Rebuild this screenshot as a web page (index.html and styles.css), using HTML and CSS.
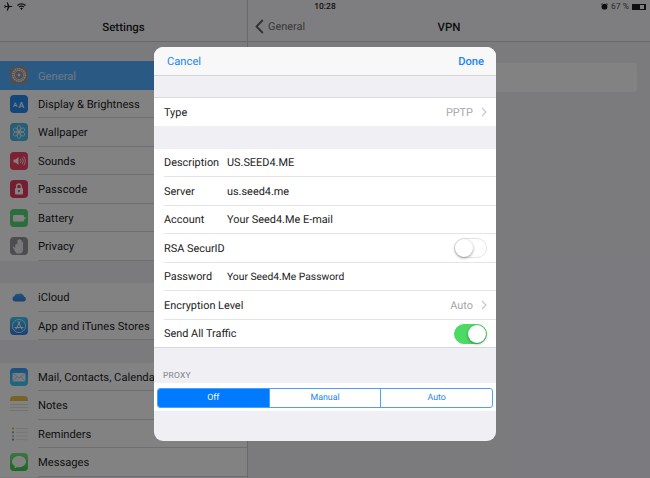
FILE: index.html
```html
<!DOCTYPE html>
<html lang="en">
<head>
<meta charset="utf-8">
<title>VPN Settings</title>
<link rel="stylesheet" href="styles.css">
</head>
<body>
<div class="app">
  <aside class="sidebar">
    <header class="nav nav-center"><span class="nav-title">Settings</span></header>
    <ul class="group">
      <li class="row selected"><span class="icon ic-general"><svg viewBox="0 0 18 18"><circle cx="9" cy="9" r="6.2" fill="none" stroke="#e8e8ec" stroke-width="1.8" stroke-dasharray="1.5 .7"/><circle cx="9" cy="9" r="4.6" fill="none" stroke="#e8e8ec" stroke-width=".8"/><circle cx="9" cy="9" r="1.4" fill="#e8e8ec"/></svg></span><span class="label">General</span></li>
      <li class="row"><span class="icon ic-display"><svg viewBox="0 0 18 18"><text x="3" y="12" class="aa-small">A</text><text x="8.6" y="12.6" class="aa-big">A</text></svg></span><span class="label">Display &amp; Brightness</span></li>
      <li class="row"><span class="icon ic-wall"><svg viewBox="0 0 18 18"><g fill="none" stroke="#fff" stroke-width=".7"><ellipse cx="9" cy="5.7" rx="2" ry="3.1"/><ellipse cx="9" cy="12.3" rx="2" ry="3.1"/><ellipse cx="9" cy="5.7" rx="2" ry="3.1" transform="rotate(60 9 9)"/><ellipse cx="9" cy="12.3" rx="2" ry="3.1" transform="rotate(60 9 9)"/><ellipse cx="9" cy="5.7" rx="2" ry="3.1" transform="rotate(120 9 9)"/><ellipse cx="9" cy="12.3" rx="2" ry="3.1" transform="rotate(120 9 9)"/></g></svg></span><span class="label">Wallpaper</span></li>
      <li class="row"><span class="icon ic-sounds"><svg viewBox="0 0 18 18"><path d="M3.5 7.5h2L8.5 5v8l-3-2.500h-2z" fill="#fff"/><path d="M10.300 7a3 3 0 0 1 0 4M12 5.700a5 5 0 0 1 0 6.600M13.700 4.500a7 7 0 0 1 0 9" fill="none" stroke="#fff" stroke-width=".8"/></svg></span><span class="label">Sounds</span></li>
      <li class="row"><span class="icon ic-pass"><svg viewBox="0 0 18 18"><rect x="5" y="8" width="8" height="6.500" rx="1" fill="#fff"/><path d="M6.700 8V6.300a2.300 2.300 0 0 1 4.600 0V8" fill="none" stroke="#fff" stroke-width="1.300"/><circle cx="9" cy="11" r="1" fill="#e0214f"/></svg></span><span class="label">Passcode</span></li>
      <li class="row"><span class="icon ic-batt"><svg viewBox="0 0 18 18"><rect x="3" y="6" width="11" height="6.500" rx="1" fill="#fff"/><rect x="14.300" y="8" width="1.200" height="2.500" fill="#fff"/></svg></span><span class="label">Battery</span></li>
      <li class="row"><span class="icon ic-priv"><svg viewBox="0 0 18 18"><path d="M5.200 7.500v3.800l-1.600-2-.9.600 2.600 5c.6 1 1.500 1.600 3 1.600h1.400c2 0 3.300-1.500 3.300-3.500V5.500c0-1.100-1.300-1.100-1.300 0v3V3.600c0-1.100-1.400-1.100-1.400 0v4.900V2.700c0-1.100-1.500-1.100-1.500 0v5.800-5c0-1.100-1.400-1.100-1.400 0v5-1c0-1.100-1.200-1.100-1.200 0z" fill="#e9e9ee"/></svg></span><span class="label">Privacy</span></li>
    </ul>
    <ul class="group">
      <li class="row"><span class="icon ic-cloud"><svg viewBox="0 0 18 18"><defs><linearGradient id="cloud" x1="0" y1="0" x2="0" y2="1"><stop offset="0" stop-color="#2e9bf0"/><stop offset="1" stop-color="#1a6fd8"/></linearGradient></defs><path d="M5 13.500a2.800 2.800 0 0 1-.5-5.500 3 3 0 0 1 3.600-2 4 4 0 0 1 6 2.600 2.500 2.500 0 0 1-.4 4.900z" fill="url(#cloud)"/></svg></span><span class="label">iCloud</span></li>
      <li class="row"><span class="icon ic-store"><svg viewBox="0 0 18 18"><circle cx="9" cy="9" r="6.600" fill="none" stroke="#fff" stroke-width=".7"/><path d="M9.800 4.800 6 12.200M8.200 4.800 12 12.200M4.800 10.600h8.400" fill="none" stroke="#fff" stroke-width="1" stroke-linecap="round"/></svg></span><span class="label">App and iTunes Stores</span></li>
    </ul>
    <ul class="group">
      <li class="row"><span class="icon ic-mail"><svg viewBox="0 0 18 18"><rect x="2.500" y="5" width="13" height="8.500" rx=".8" fill="#eef3f9"/><path d="M2.800 5.300 9 10l6.200-4.700M2.800 13.200 7 8.800M15.200 13.200 11 8.800" fill="none" stroke="#7ea3d0" stroke-width=".6"/></svg></span><span class="label">Mail, Contacts, Calendars</span></li>
      <li class="row"><span class="icon ic-notes"><svg viewBox="0 0 18 18"><path d="M0 2.500h18" stroke="#e6ba2e" stroke-width="5"/><path d="M0 8.500h18M0 11.500h18M0 14.500h18" stroke="#d4d4d4" stroke-width=".7"/></svg></span><span class="label">Notes</span></li>
      <li class="row"><span class="icon ic-rem"><svg viewBox="0 0 18 18"><circle cx="3" cy="3.500" r="1.100" fill="#ff9500"/><circle cx="3" cy="7.300" r="1.100" fill="#2aa7e8"/><circle cx="3" cy="11" r="1.100" fill="#4cd964"/><circle cx="3" cy="14.700" r="1.100" fill="#b15cd6"/><path d="M6 3.500h12M6 7.300h12M6 11h12M6 14.700h12" stroke="#d4d4d4" stroke-width=".7"/></svg></span><span class="label">Reminders</span></li>
      <li class="row"><span class="icon ic-msg"><svg viewBox="0 0 18 18"><path d="M9 3c-3.900 0-7 2.500-7 5.600 0 2 1.200 3.700 3.100 4.700-.2.800-.6 1.500-1.300 2.100 1.200 0 2.300-.5 3.200-1.300.6.100 1.300.2 2 .2 3.900 0 7-2.500 7-5.700S12.900 3 9 3z" fill="#fff"/></svg></span><span class="label">Messages</span></li>
    </ul>
  </aside>
  <main class="detail">
    <header class="nav nav-detail">
      <span class="back"><svg class="back-chev" viewBox="0 0 9 15"><path d="M7.800 1 1.500 7.500l6.300 6.500" fill="none" stroke="#007aff" stroke-width="1.800"/></svg>General</span>
      <span class="nav-title">VPN</span>
    </header>
    <div class="vpn-card"></div>
  </main>
  <div class="status">
    <span class="status-left"><svg class="st-plane" viewBox="0 0 9 9"><path d="M8.500 4.500c0-.4-.4-.6-.9-.6H5.500L3.600.3H2.700l1 3.600H1.800L1 2.900H.3l.5 1.600-.5 1.600H1l.8-1h1.900l-1 3.600h.9l1.900-3.600h2.100c.5 0 .9-.2.900-.5z"/></svg><svg class="st-wifi" viewBox="0 0 9 7"><path d="M4.500 7 3.100 5.400a2 2 0 0 1 2.800 0zM2.400 4.600 1.600 3.700a4.300 4.300 0 0 1 5.800 0l-.8.900a3.100 3.100 0 0 0-4.200 0zM.9 3 0 2a6.600 6.600 0 0 1 9 0l-.9 1a5.300 5.300 0 0 0-7.200 0z"/></svg></span>
    <span class="status-time">10:28</span>
    <span class="status-right"><svg class="st-alarm" viewBox="0 0 7 7"><circle cx="3.500" cy="3.700" r="2.900"/><path d="M.2 1.500 1.500.4M6.800 1.500 5.500.4" stroke="#000" stroke-width=".8"/></svg><span class="st-pct">67 %</span><span class="st-batt"><span class="st-level"></span></span></span>
  </div>
  <div class="scrim"></div>
  <section class="modal">
    <header class="modal-head"><span class="link">Cancel</span><span class="link strong">Done</span></header>
    <div class="form-group top-group">
      <div class="frow"><span>Type</span><span class="fvalue">PPTP</span><svg class="chev" viewBox="0 0 6 10"><path d="M1 1l4 4-4 4" fill="none" stroke="#c7c7cc" stroke-width="1.100"/></svg></div>
    </div>
    <div class="form-group mid-group">
      <div class="frow"><span class="fkey">Description</span><span>US.SEED4.ME</span></div>
      <div class="frow"><span class="fkey">Server</span><span>us.seed4.me</span></div>
      <div class="frow"><span class="fkey">Account</span><span>Your Seed4.Me E-mail</span></div>
      <div class="frow"><span class="fkey wide">RSA SecurID</span><span class="toggle"><span class="knob"></span></span></div>
      <div class="frow"><span class="fkey">Password</span><span class="fsecret">Your Seed4.Me Password</span></div>
      <div class="frow"><span>Encryption Level</span><span class="fvalue">Auto</span><svg class="chev" viewBox="0 0 6 10"><path d="M1 1l4 4-4 4" fill="none" stroke="#c7c7cc" stroke-width="1.100"/></svg></div>
      <div class="frow"><span>Send All Traffic</span><span class="toggle on"><span class="knob"></span></span></div>
    </div>
    <div class="section-label">PROXY</div>
    <div class="seg-band">
      <div class="segmented"><span class="seg active">Off</span><span class="seg">Manual</span><span class="seg">Auto</span></div>
    </div>
  </section>
</div>
</body>
</html>
```

FILE: styles.css
```css
* { box-sizing: border-box; }
html, body { margin: 0; padding: 0; }
body { width: 650px; height: 478px; overflow: hidden; font-family: Roboto, "Liberation Sans", sans-serif; font-size: 10.9px; color: #000; text-rendering: geometricPrecision; }
ul { list-style: none; margin: 0; padding: 0; }
.app { position: relative; display: flex; width: 650px; height: 478px; overflow: hidden; background: #efeff4; }
.sidebar { width: 248px; flex: none; border-right: 1px solid #c8c7cc; background: #efeff4; }
.detail { flex: 1; min-width: 0; }
.nav { height: 42px; padding-top: 12px; border-bottom: 1px solid #c8c7cc; background: #f7f7f8; font-size: 11.5px; display: flex; align-items: center; }
.nav-center { justify-content: center; }
.nav-title { font-weight: 500; }
.nav-detail { position: relative; justify-content: center; }
.back { position: absolute; left: 7px; top: 19px; display: flex; align-items: center; gap: 4px; color: #5a5a5e; font-size: 10.9px; }
.back-chev { width: 9px; height: 15px; }
.back-chev path { stroke: #4a4a4e; }
.group { background: #fff; margin-bottom: 22.5px; }
.group:first-of-type { margin-top: 19px; }
.row { height: 28.5px; display: flex; align-items: center; padding-left: 10px; gap: 10px; position: relative; font-size: 11.2px; }
.row .label { flex: 1; white-space: nowrap; height: 100%; display: flex; align-items: center; padding-top: 1.6px; border-bottom: 1px solid #d4d4d8; }
.row.selected { background: #3ca7ff; color: #fff; }
.row.selected .label { opacity: .75; border-bottom: 0; }
.icon { width: 18px; height: 18px; flex: none; border-radius: 4px; overflow: hidden; display: block; }
.icon svg { display: block; width: 18px; height: 18px; }
.aa-small { font: 500 6.5px Roboto, sans-serif; fill: #fff; }
.aa-big { font: 500 8.5px Roboto, sans-serif; fill: #fff; }
.ic-general { background: #8e8e93; }
.ic-display { background: #0a7cf0; }
.ic-wall { background: #35aee0; }
.ic-sounds { background: #f02a4f; }
.ic-pass { background: #e0214f; }
.ic-batt { background: #3fd060; }
.ic-priv { background: #8a8a90; }
.ic-cloud { background: #fff; }
.ic-store { background: linear-gradient(#25c5f5, #1a6fe0); }
.ic-mail { background: linear-gradient(#1e8ff5, #27c8f5); }
.ic-notes { background: #fff; }
.ic-rem { background: #fff; }
.ic-msg { background: linear-gradient(#62e668, #1fc52f); }
.vpn-card { margin: 21px 13px 0 0; height: 29px; background: #fff; border-radius: 0 4px 4px 0; }
.status { position: absolute; left: 0; top: 0; width: 650px; height: 13px; display: flex; align-items: center; justify-content: space-between; padding: 0 4px; font-size: 8.500px; }
.status-left, .status-right { display: flex; align-items: center; width: 60px; }
.status-left { gap: 4px; }
.status-right { justify-content: flex-end; gap: 3px; }
.st-pct { color: #333; white-space: nowrap; }
.status-time { font-weight: 500; }
.st-plane { width: 9px; height: 9px; }
.st-wifi { width: 9px; height: 7px; }
.st-alarm { width: 7px; height: 7px; }
.st-batt { width: 14px; height: 6px; border: 1px solid #000; border-right-width: 2px; display: block; }
.st-level { display: block; width: 67%; height: 100%; background: #000; }
.scrim { position: absolute; inset: 0; background: rgba(27, 27, 30, .55); }
.modal { position: absolute; left: 154px; top: 47px; width: 342px; height: 394px; border-radius: 9px; overflow: hidden; background: #efeff4; display: flex; flex-direction: column; color: #222; }
.modal-head { height: 29px; flex: none; display: flex; align-items: center; justify-content: space-between; padding: 1px 12px 0 13px; background: #f8f8f9; border-bottom: 1px solid #d3d3d7; font-size: 11.2px; }
.link { color: #1a84f5; }
.strong { font-weight: 500; }
.form-group { background: #fff; }
.top-group { margin-top: 21px; border-top: 1px solid #dcdce0; }
.top-group .frow { height: 27.5px; border-bottom: 0; }
.mid-group { margin-top: 23px; }
.frow { height: 28.5px; display: flex; align-items: center; padding: .6px 9px 0 0; margin-left: 10px; border-bottom: 1px solid #e4e4e7; font-size: 10.9px; }
.mid-group .frow:last-child { border-bottom-color: #d8d8dc; margin-left: 0; padding-left: 10px; }
.fkey { width: 63px; flex: none; white-space: nowrap; }
.fkey.wide { flex: 1; }
.fsecret { font-size: 10.3px; }
.fvalue { margin-left: auto; color: #a6a6aa; margin-right: 8px; }
.chev { width: 6px; height: 10px; }
.toggle { width: 33px; height: 20px; border-radius: 10px; border: 1px solid #e3e3e6; background: #fff; position: relative; display: block; margin-left: auto; }
.toggle .knob { position: absolute; left: 0; top: 0; width: 18px; height: 18px; border-radius: 50%; background: #fff; box-shadow: 0 1px 3px rgba(0,0,0,.4); }
.toggle.on { background: #4cd964; border-color: #4cd964; }
.toggle.on .knob { left: 13px; }
.section-label { margin: 22.500px 0 0 9px; font-size: 8.500px; line-height: 10px; color: #808086; letter-spacing: .2px; }
.seg-band { margin-top: 2.500px; height: 28px; background: #fff; padding: 5px 3px; }
.segmented { display: flex; height: 19.500px; border: 1px solid #4f9ff7; border-radius: 3px; overflow: hidden; }
.seg { flex: 1; display: flex; align-items: center; justify-content: center; color: #1a84f5; font-size: 8.800px; border-left: 1px solid #4f9ff7; }
.seg:first-child { border-left: 0; }
.seg.active { background: #007aff; color: #fff; }
```
